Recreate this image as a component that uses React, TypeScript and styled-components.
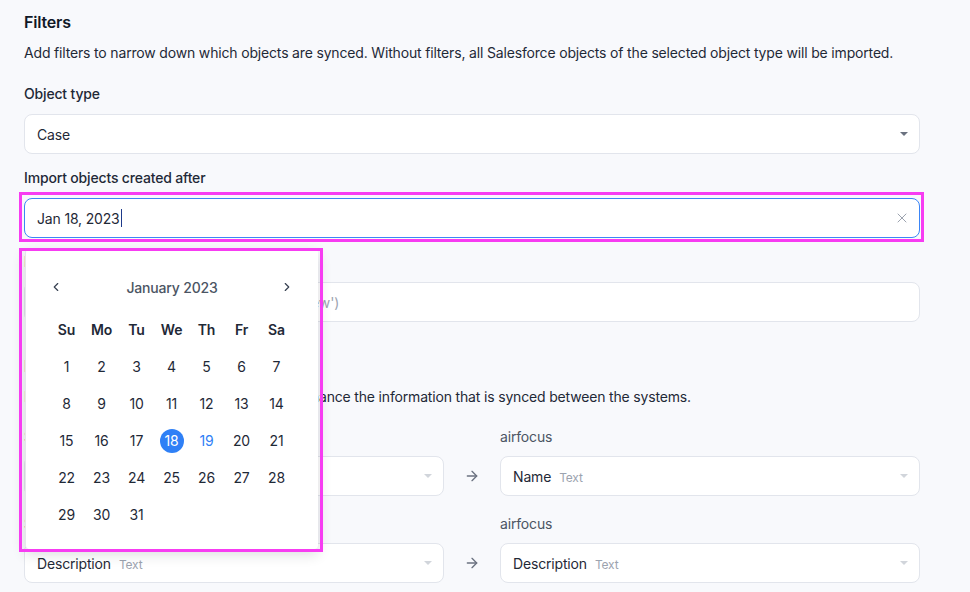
import React from 'react';
import styled, { createGlobalStyle } from 'styled-components';
import { ChevronLeft, ChevronRight, ArrowRight, X } from 'lucide-react';

const GlobalStyle = createGlobalStyle`
  * { box-sizing: border-box; }
  html, body {
    margin: 0;
    padding: 0;
    background: #f8f9fc;
    font-family: Inter, "Noto Sans", "Liberation Sans", sans-serif;
    letter-spacing: -0.17px;
    color: #1f2937;
    -webkit-font-smoothing: antialiased;
  }
`;

const Page = styled.div`
  width: 970px;
  height: 592px;
  overflow: hidden;
  padding: 12px 50px 0 24px;
`;

const Section = styled.section<{ $offset?: number }>`
  display: flex;
  flex-direction: column;
  margin-top: ${({ $offset }) => $offset ?? 0}px;
`;

const Heading = styled.h2`
  margin: 0;
  font-size: 16px;
  line-height: 20px;
  font-weight: 600;
  color: #111827;
`;

const Description = styled.p`
  margin: 11px 0 0;
  font-size: 14px;
  line-height: 20px;
  color: #1f2937;
  white-space: nowrap;
`;

const Field = styled.div<{ $gap?: number }>`
  display: flex;
  flex-direction: column;
  gap: 10px;
  margin-top: ${({ $gap }) => $gap ?? 14}px;
`;

const Label = styled.div<{ $muted?: boolean }>`
  font-size: 14px;
  line-height: 20px;
  font-weight: ${({ $muted }) => ($muted ? 400 : 500)};
  color: ${({ $muted }) => ($muted ? '#4b5563' : '#1f2937')};
`;

const Box = styled.div<{ $focused?: boolean }>`
  position: relative;
  height: 40px;
  display: flex;
  align-items: center;
  padding: 0 12px;
  background: #fff;
  border: 1px solid ${({ $focused }) => ($focused ? '#3b86f7' : '#e2e5ec')};
  border-radius: 8px;
  font-size: 14px;
  color: #1f2937;
`;

const Value = styled.span`
  flex: 1;
  display: flex;
  align-items: baseline;
  gap: 8px;
  white-space: nowrap;
  overflow: hidden;
`;

const Placeholder = styled.span`
  flex: 1;
  color: #9ca3af;
  white-space: nowrap;
`;

const TypeHint = styled.span`
  font-size: 12px;
  color: #9ca3af;
`;

const Caret = styled.span<{ $light?: boolean }>`
  width: 0;
  height: 0;
  margin-right: -1px;
  border-left: 4px solid transparent;
  border-right: 4px solid transparent;
  border-top: 4px solid ${({ $light }) => ($light ? '#d1d5db' : '#6b7280')};
`;

const TypedText = styled.span`
  display: flex;
  align-items: center;
`;

const TextCursor = styled.span`
  display: inline-block;
  width: 1px;
  height: 18px;
  margin-left: 1px;
  background: #1e3a8a;
`;

const ClearButton = styled.span`
  display: flex;
  color: #9ca3af;
  margin-right: -3px;
`;

const DateWrap = styled.div`
  position: relative;
`;

const Highlight = styled.div`
  position: absolute;
  border: 3px solid #f73cf2;
  pointer-events: none;
  z-index: 20;
`;

const InputHighlight = styled(Highlight)`
  top: -6px;
  left: -5px;
  right: -4px;
  bottom: -4px;
`;

const Popover = styled.div`
  position: absolute;
  top: calc(100% + 11px);
  left: 1px;
  width: 293px;
  padding: 28px 24px 16px 23px;
  background: #fff;
  border-left: 1px solid #e5e7eb;
  border-radius: 4px;
  box-shadow: 0 5px 14px rgba(17, 24, 39, 0.16);
  z-index: 10;
`;

const PopoverHighlight = styled(Highlight)`
  top: -1px;
  left: -7px;
  right: -5px;
  bottom: -3px;
`;

const CalendarHeader = styled.div`
  height: 20px;
  display: flex;
  align-items: center;
  justify-content: space-between;
  margin-bottom: 14px;
`;

const NavButton = styled.span`
  width: 14px;
  display: flex;
  justify-content: center;
  color: #374151;
`;

const MonthTitle = styled.span`
  font-size: 14px;
  font-weight: 500;
  color: #4b5563;
  margin-left: 1px;
`;

const DayGrid = styled.div`
  display: grid;
  grid-template-columns: repeat(7, 35px);
  grid-auto-rows: 37px;
`;

const Weekday = styled.div`
  display: flex;
  align-items: center;
  justify-content: center;
  font-size: 14px;
  font-weight: 600;
  color: #1f2937;
`;

const Day = styled.div<{ $selected?: boolean; $today?: boolean }>`
  display: flex;
  align-items: center;
  justify-content: center;
  font-size: 14px;
  color: ${({ $selected, $today }) => ($selected ? '#fff' : $today ? '#2f80f6' : '#1f2937')};

  span {
    width: 24px;
    height: 24px;
    border-radius: 50%;
    display: flex;
    align-items: center;
    justify-content: center;
    background: ${({ $selected }) => ($selected ? '#2f80f6' : 'transparent')};
  }
`;

const MappingList = styled.div`
  display: flex;
  flex-direction: column;
  gap: 18px;
  margin-top: 20px;
`;

const MappingRow = styled.div`
  display: grid;
  grid-template-columns: 1fr 56px 1fr;
  align-items: end;
`;

const MappingColumn = styled.div`
  display: flex;
  flex-direction: column;
  gap: 9px;
`;

const ArrowCell = styled.div`
  height: 40px;
  display: flex;
  align-items: center;
  justify-content: center;
  color: #6b7280;
`;

const weekdays = ['Su', 'Mo', 'Tu', 'We', 'Th', 'Fr', 'Sa'];
const days = Array.from({ length: 31 }, (_, i) => i + 1);

const mappings = [
  { from: 'Name', to: 'Name' },
  { from: 'Description', to: 'Description' },
];

const Calendar: React.FC = () => (
  <Popover>
    <PopoverHighlight />
    <CalendarHeader>
      <NavButton>
        <ChevronLeft size={20} strokeWidth={2} />
      </NavButton>
      <MonthTitle>January 2023</MonthTitle>
      <NavButton>
        <ChevronRight size={20} strokeWidth={2} />
      </NavButton>
    </CalendarHeader>
    <DayGrid>
      {weekdays.map((w) => (
        <Weekday key={w}>{w}</Weekday>
      ))}
      {days.map((d) => (
        <Day key={d} $selected={d === 18} $today={d === 19}>
          <span>{d}</span>
        </Day>
      ))}
    </DayGrid>
  </Popover>
);

const App: React.FC = () => {
  return (
    <>
      <GlobalStyle />
      <Page>
        <Section>
          <Heading>Filters</Heading>
          <Description>
            Add filters to narrow down which objects are synced. Without filters, all Salesforce objects of the
            selected object type will be imported.
          </Description>

          <Field $gap={21}>
            <Label>Object type</Label>
            <Box>
              <Value>Case</Value>
              <Caret />
            </Box>
          </Field>

          <Field>
            <Label>Import objects created after</Label>
            <DateWrap>
              <Box $focused>
                <Value>
                  <TypedText>
                    Jan 18, 2023
                    <TextCursor />
                  </TypedText>
                </Value>
                <ClearButton>
                  <X size={16} strokeWidth={1.5} />
                </ClearButton>
              </Box>
              <InputHighlight />
              <Calendar />
            </DateWrap>
          </Field>

          <Field>
            <Label>Filter query</Label>
            <Box>
              <Placeholder>Optional SOQL conditions (e.g. Status = 'New')</Placeholder>
            </Box>
          </Field>
        </Section>

        <Section $offset={34}>
          <Heading>Field mapping</Heading>
          <Description>
            Map Salesforce fields to airfocus fields to enhance the information that is synced between the systems.
          </Description>

          <MappingList>
            {mappings.map((m) => (
              <MappingRow key={m.from}>
                <MappingColumn>
                  <Label $muted>Salesforce</Label>
                  <Box>
                    <Value>
                      {m.from}
                      <TypeHint>Text</TypeHint>
                    </Value>
                    <Caret $light />
                  </Box>
                </MappingColumn>
                <ArrowCell>
                  <ArrowRight size={16} strokeWidth={2} />
                </ArrowCell>
                <MappingColumn>
                  <Label $muted>airfocus</Label>
                  <Box>
                    <Value>
                      {m.to}
                      <TypeHint>Text</TypeHint>
                    </Value>
                    <Caret $light />
                  </Box>
                </MappingColumn>
              </MappingRow>
            ))}
          </MappingList>
        </Section>
      </Page>
    </>
  );
};

export default App;
